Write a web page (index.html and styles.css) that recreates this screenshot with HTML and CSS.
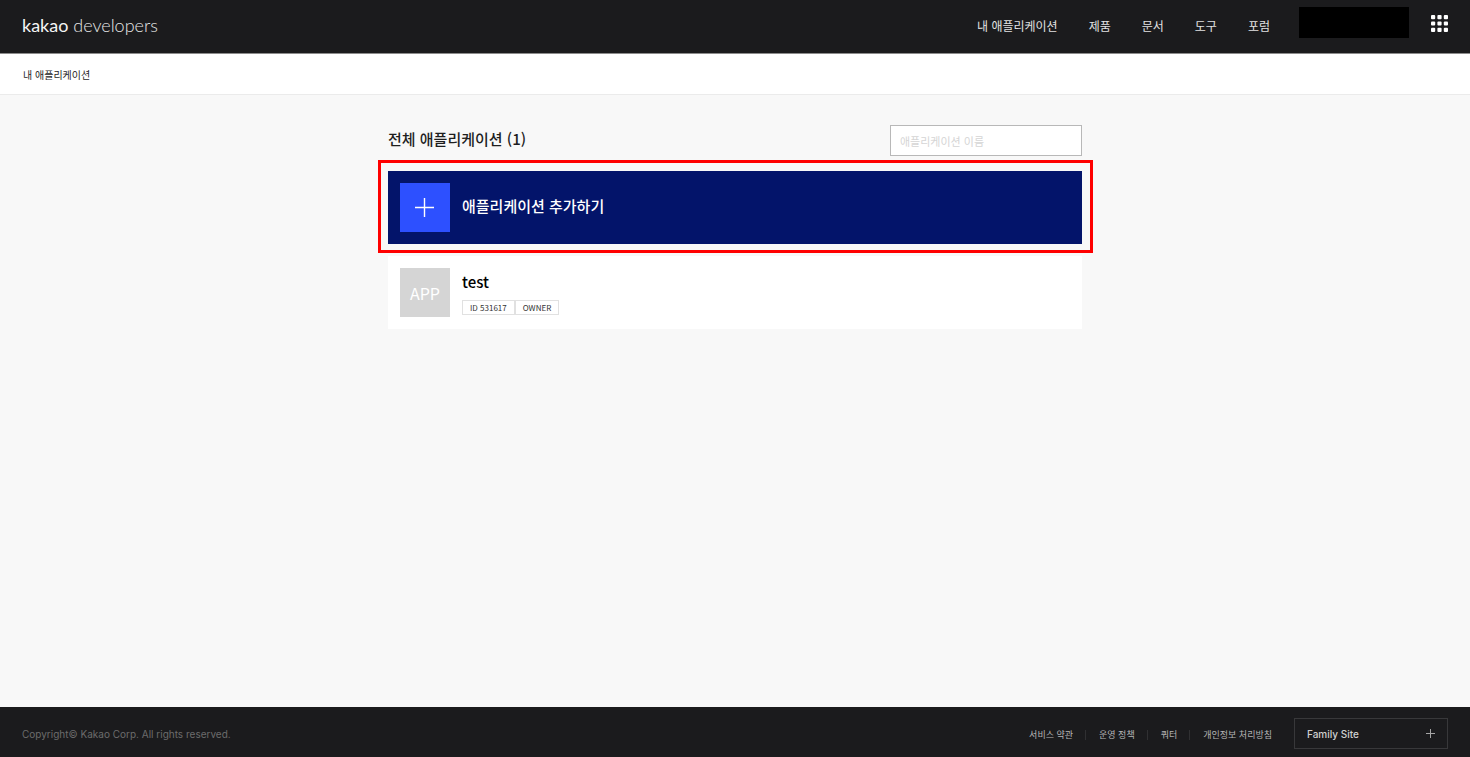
FILE: index.html
```html
<!DOCTYPE html>
<html lang="ko">
<head>
<meta charset="utf-8">
<meta name="viewport" content="width=device-width, initial-scale=1">
<title>내 애플리케이션 | kakao developers</title>
<link rel="stylesheet" href="styles.css">
</head>
<body>
<header class="header">
  <a class="logo" href="#"><span class="logo-strong">kakao</span> developers</a>
  <nav class="nav">
    <a href="#">내 애플리케이션</a>
    <a href="#">제품</a>
    <a href="#">문서</a>
    <a href="#">도구</a>
    <a href="#">포럼</a>
  </nav>
  <div class="account"></div>
  <button class="apps" type="button" aria-label="전체 서비스">
    <svg width="17" height="17" viewBox="0 0 17 17" fill="#fff" aria-hidden="true">
      <rect x="0" y="0" width="4.2" height="4.2" rx="1"/><rect x="6.4" y="0" width="4.2" height="4.2" rx="1"/><rect x="12.8" y="0" width="4.2" height="4.2" rx="1"/>
      <rect x="0" y="6.4" width="4.2" height="4.2" rx="1"/><rect x="6.4" y="6.4" width="4.2" height="4.2" rx="1"/><rect x="12.8" y="6.4" width="4.2" height="4.2" rx="1"/>
      <rect x="0" y="12.8" width="4.2" height="4.2" rx="1"/><rect x="6.4" y="12.8" width="4.2" height="4.2" rx="1"/><rect x="12.8" y="12.8" width="4.2" height="4.2" rx="1"/>
    </svg>
  </button>
</header>
<div class="breadcrumb"><a href="#">내 애플리케이션</a></div>
<main class="main">
  <div class="title-row">
    <h1 class="title">전체 애플리케이션 (1)</h1>
    <input class="search" type="text" placeholder="애플리케이션 이름" aria-label="애플리케이션 이름">
  </div>
  <button class="card card-add" type="button">
    <span class="thumb thumb-add">
      <svg width="20" height="19" viewBox="0 0 20 19" stroke="#fff" stroke-width="1.4" aria-hidden="true"><path d="M9.5 0v19M0 9.5h19"/></svg>
    </span>
    <span class="card-name">애플리케이션 추가하기</span>
  </button>
  <a class="card card-app" href="#">
    <span class="thumb thumb-app">APP</span>
    <span class="info">
      <span class="card-name">test</span>
      <span class="badges"><span class="badge">ID 531617</span><span class="badge">OWNER</span></span>
    </span>
  </a>
</main>
<footer class="footer">
  <p class="copyright">Copyright© Kakao Corp. All rights reserved.</p>
  <ul class="links">
    <li><a href="#">서비스 약관</a></li>
    <li><a href="#">운영 정책</a></li>
    <li><a href="#">쿼터</a></li>
    <li><a href="#">개인정보 처리방침</a></li>
  </ul>
  <button class="family" type="button">Family Site
    <svg width="9" height="9" viewBox="0 0 9 9" stroke="#a5a5a5" aria-hidden="true"><path d="M4.5 0v9M0 4.5h9"/></svg>
  </button>
</footer>
</body>
</html>
```
FILE: styles.css
```css
* { box-sizing: border-box; }
body {
  margin: 0;
  min-height: 100vh;
  display: flex;
  flex-direction: column;
  background: #f8f8f8;
  color: #1e1e1e;
  font-family: "Noto Sans CJK KR", sans-serif;
}
a { color: inherit; text-decoration: none; }
button { font: inherit; border: 0; padding: 0; background: none; cursor: pointer; }
svg { display: block; }

.header {
  display: flex;
  align-items: center;
  height: 54px;
  padding: 0 22px 6px;
  background: #1b1b1d;
  border-bottom: 1px solid #8c8c8c;
  color: #e2e2e2;
}
.logo {
  padding-top: 2px;
  font-family: Lato, sans-serif;
  font-size: 18px;
  line-height: 24px;
  font-weight: 300;
  color: #e6e6e6;
}
.logo-strong { font-weight: 400; color: #f4f4f4; }
.nav {
  display: flex;
  gap: 31px;
  margin-left: auto;
  padding-top: 4px;
  font-size: 12px;
  line-height: 20px;
}
.account { width: 110px; height: 31px; margin: 0 22px 2px 29px; background: #000; }

.breadcrumb {
  height: 41px;
  padding: 12px 23px;
  background: #fff;
  border-bottom: 1px solid #ebebeb;
  font-size: 10px;
  line-height: 18px;
}

.main {
  flex: 1;
  width: 100%;
  max-width: 694px;
  margin: 0 auto;
  padding-top: 30px;
}
.title-row {
  display: flex;
  justify-content: space-between;
  align-items: center;
  margin-bottom: 15px;
}
.title { margin: 0; padding-bottom: 4px; font-size: 15px; line-height: 24px; font-weight: 500; }
.search {
  width: 192px;
  height: 31px;
  padding: 0 9px;
  border: 1px solid #b8b8b8;
  border-radius: 0;
  background: #fff;
  font: 11px/20px "Noto Sans CJK KR", sans-serif;
}
.search::placeholder { color: #d5d5d5; opacity: 1; }

.card {
  position: relative;
  display: flex;
  align-items: center;
  gap: 12px;
  width: 100%;
  padding: 12px;
  background: #fff;
  text-align: left;
}
.card-add { margin-bottom: 12px; background: #03146a; color: #fff; }
.card-add::after {
  content: "";
  position: absolute;
  inset: -11px -11px -9px -10px;
  border: 3px solid #f00;
}
.card-name { font-size: 15px; line-height: 22px; font-weight: 500; }
.card-add .card-name { padding-bottom: 4px; }
.card-app { color: #000; }
.thumb {
  display: flex;
  align-items: center;
  justify-content: center;
  width: 50px;
  height: 49px;
}
.thumb-add { background: #2d50ff; }
.thumb-app { background: #d5d5d5; color: #fff; font-size: 16px; }
.info { display: flex; flex-direction: column; gap: 7px; }
.badges { display: flex; }
.badge {
  padding: 0 7px;
  border: 1px solid #e1e1e1;
  color: #333;
  font-size: 8px;
  line-height: 13px;
}

.footer {
  display: flex;
  align-items: center;
  height: 50px;
  padding: 3px 22px 0;
  background: #1b1b1d;
  color: #b5b5b5;
}
.copyright { margin: 0; color: #6c6c6c; font: 10px/16px Inter, sans-serif; }
.links {
  display: flex;
  margin: 0 22px 0 auto;
  padding: 2px 0 0;
  list-style: none;
  font-size: 9px;
  line-height: 16px;
}
.links li { display: flex; align-items: center; }
.links li + li::before {
  content: "";
  width: 1px;
  height: 10px;
  margin: 0 13px 0 12px;
  background: #303032;
}
.family {
  display: flex;
  justify-content: space-between;
  align-items: center;
  width: 154px;
  height: 31px;
  padding: 0 12px;
  border: 1px solid #38383a;
  color: #d0d0d0;
  font: 500 10px/16px Inter, sans-serif;
}
```
